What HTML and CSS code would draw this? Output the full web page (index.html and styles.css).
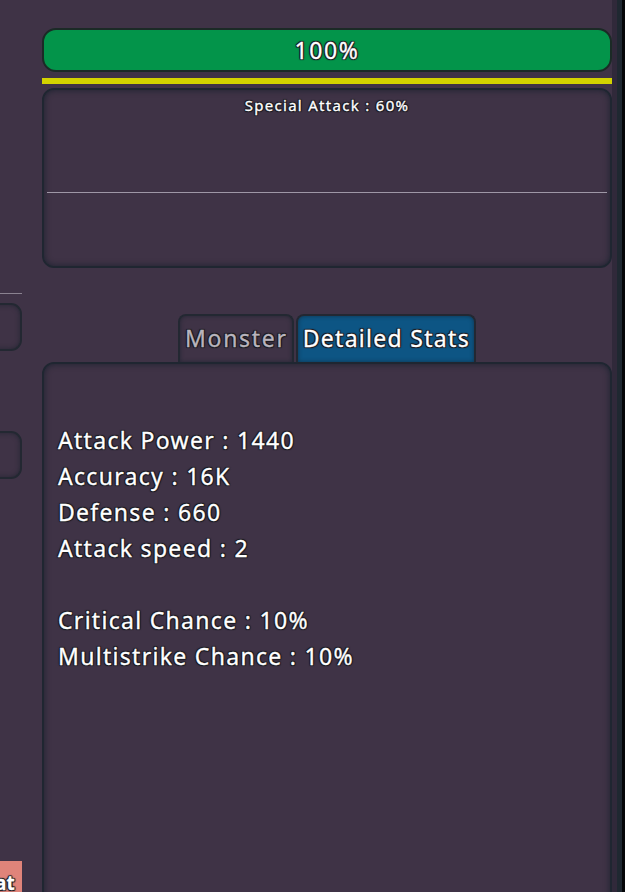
FILE: index.html
```html
<!DOCTYPE html>
<html lang="en">
<head>
<meta charset="UTF-8">
<title>Detailed Stats</title>
<link rel="stylesheet" href="styles.css">
</head>
<body>
<div class="screen">

  <!-- cut-off left column -->
  <div class="side">
    <div class="side-line"></div>
    <div class="side-box"></div>
    <div class="side-box second"></div>
    <div class="side-chip">at</div>
  </div>

  <div class="main">
    <div class="hpbar">100%</div>
    <div class="special-bar"></div>

    <div class="panel special">
      <div class="special-title">Special Attack : 60%</div>
      <div class="special-rule"></div>
    </div>

    <div class="tabs">
      <div class="tab">Monster</div>
      <div class="tab active">Detailed Stats</div>
    </div>

    <div class="panel stats">
      <div class="stat">Attack Power : 1440</div>
      <div class="stat">Accuracy : 16K</div>
      <div class="stat">Defense : 660</div>
      <div class="stat">Attack speed : 2</div>
      <div class="stat gap"></div>
      <div class="stat">Critical Chance : 10%</div>
      <div class="stat">Multistrike Chance : 10%</div>
    </div>
  </div>

  <div class="edge"></div>
</div>
</body>
</html>
```
FILE: styles.css
```css
html,body{margin:0;height:100%;overflow:hidden;}
body{background:#3f3346;font-family:"Noto Sans","Open Sans",sans-serif;color:#fff;}

.screen{display:flex;height:892px;}

/* outline for all game text */
.hpbar,.special-title,.tab,.stat,.side-chip{
  -webkit-text-stroke:0.3px currentColor;
  text-shadow:1px 0 0 #1b1b22,-1px 0 0 #1b1b22,0 1px 0 #1b1b22,0 -1px 0 #1b1b22,
              1px 1px 1px #1b1b22,-1px -1px 1px #1b1b22,1px -1px 1px #1b1b22,-1px 1px 1px #1b1b22;
}

/* left column, mostly off screen */
.side{width:22px;flex:none;display:flex;flex-direction:column;}
.side-line{height:1px;background:#8a8290;margin-top:293px;}
.side-box{
  height:44px;margin-top:9px;margin-left:-40px;
  border:2px solid #232832;border-radius:11px;
  box-shadow:inset 0 0 5px rgba(20,30,40,.6);
}
.side-box.second{margin-top:80px;}
.side-chip{
  margin-top:auto;height:31px;background:#e0847a;
  font-weight:700;font-size:19px;line-height:44px;overflow:hidden;
  text-indent:-5px;white-space:nowrap;
}

.main{width:570px;margin-left:20px;flex:none;display:flex;flex-direction:column;}

.hpbar{
  margin-top:28px;height:40px;
  background:#03944a;border:2px solid #1b2a26;border-radius:14px;
  text-align:center;font-size:23px;line-height:40px;letter-spacing:1.6px;
}
.special-bar{height:6px;margin-top:6px;background:#d3d300;}

.panel{
  border:2px solid #1f2631;border-radius:12px;
  box-shadow:inset 0 0 6px rgba(18,30,40,.75);
}
.special{margin-top:4px;height:176px;display:flex;flex-direction:column;}
.special-title{text-align:center;font-size:15px;margin-top:4px;line-height:22px;letter-spacing:1.3px;}
.special-rule{height:1px;background:#9e97a6;margin:76px 3px 0;}

.tabs{display:flex;justify-content:center;gap:2px;margin-top:46px;}
.tab{
  height:46px;padding:0 4px 0 5px;
  border:2px solid #232832;border-bottom:none;border-radius:8px 8px 0 0;
  font-size:23px;line-height:44px;color:#fff;letter-spacing:1.3px;
  box-shadow:inset 0 0 4px rgba(18,30,40,.6);
}
.tab:first-child{color:#b9b4bd;letter-spacing:1.7px;}
.tab.active{background:#0d5584;}

.stats{flex:1;margin-bottom:-20px;padding:58px 0 0 14px;}
.stat{font-size:23px;line-height:36px;height:36px;letter-spacing:1.3px;}

.edge{
  width:13px;flex:none;
  background:linear-gradient(to right,#30293a 0,#30293a 5px,#1f2831 5px,#1f2831 10px,#050608 10px);
}
```
